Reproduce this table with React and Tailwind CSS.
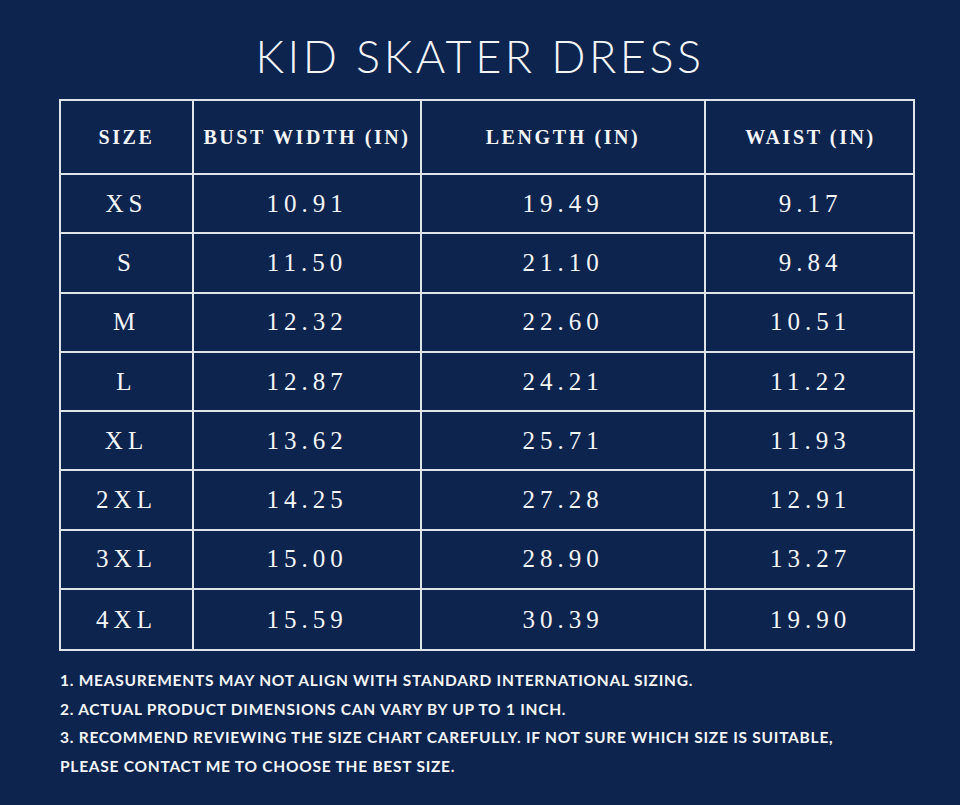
import React from 'react'

const rows = [
  ["XS", "10.91", "19.49", "9.17"],
  ["S", "11.50", "21.10", "9.84"],
  ["M", "12.32", "22.60", "10.51"],
  ["L", "12.87", "24.21", "11.22"],
  ["XL", "13.62", "25.71", "11.93"],
  ["2XL", "14.25", "27.28", "12.91"],
  ["3XL", "15.00", "28.90", "13.27"],
  ["4XL", "15.59", "30.39", "19.90"],
]

const headers = ["SIZE", "BUST WIDTH (IN)", "LENGTH (IN)", "WAIST (IN)"]

const notes = [
  "1. MEASUREMENTS MAY NOT ALIGN WITH STANDARD INTERNATIONAL SIZING.",
  "2. ACTUAL PRODUCT DIMENSIONS CAN VARY BY UP TO 1 INCH.",
  "3. RECOMMEND REVIEWING THE SIZE CHART CAREFULLY. IF NOT SURE WHICH SIZE IS SUITABLE,",
  "PLEASE CONTACT ME TO CHOOSE THE BEST SIZE.",
]

const cols = "grid grid-cols-[133px_228px_284px_209px]"

const App = () => {
  return (
    <div className="w-[960px] h-[805px] bg-[#0c244e] text-[#f4f5f7] overflow-hidden">
      <h1 className="pt-[28px] h-[99px] text-center text-[45px] leading-[56px] tracking-[3.5px] font-['Lato',sans-serif] font-light">
        KID SKATER DRESS
      </h1>
      <div className="ml-[59px] w-[856px] border-2 border-[#dfe3ea]">
        {/* header */}
        <div className={`${cols} h-[74px] border-b-2 border-[#dfe3ea]`}>
          {headers.map((h, i) => (
            <div key={h} className={`flex items-center justify-center font-['Liberation_Serif',serif] font-bold text-[20px] tracking-[2.6px] ${i < 3 ? 'border-r-2 border-[#dfe3ea]' : ''}`}>
              {h}
            </div>
          ))}
        </div>
        {rows.map((r, ri) => (
          <div key={r[0]} className={`${cols} h-[59.25px] ${ri < rows.length - 1 ? 'border-b-2 border-[#dfe3ea]' : ''}`}>
            {r.map((c, i) => (
              <div key={i} className={`flex items-center justify-center font-['Liberation_Serif',serif] text-[25px] tracking-[5px] ${i < 3 ? 'border-r-2 border-[#dfe3ea]' : ''}`}>
                {c}
              </div>
            ))}
          </div>
        ))}
      </div>
      <div className="ml-[60px] mt-[15px] font-['Lato',sans-serif] font-bold text-[15.5px] leading-[28.7px] tracking-[0.75px]">
        {notes.map(n => <p key={n}>{n}</p>)}
      </div>
    </div>
  )
}

export default App
